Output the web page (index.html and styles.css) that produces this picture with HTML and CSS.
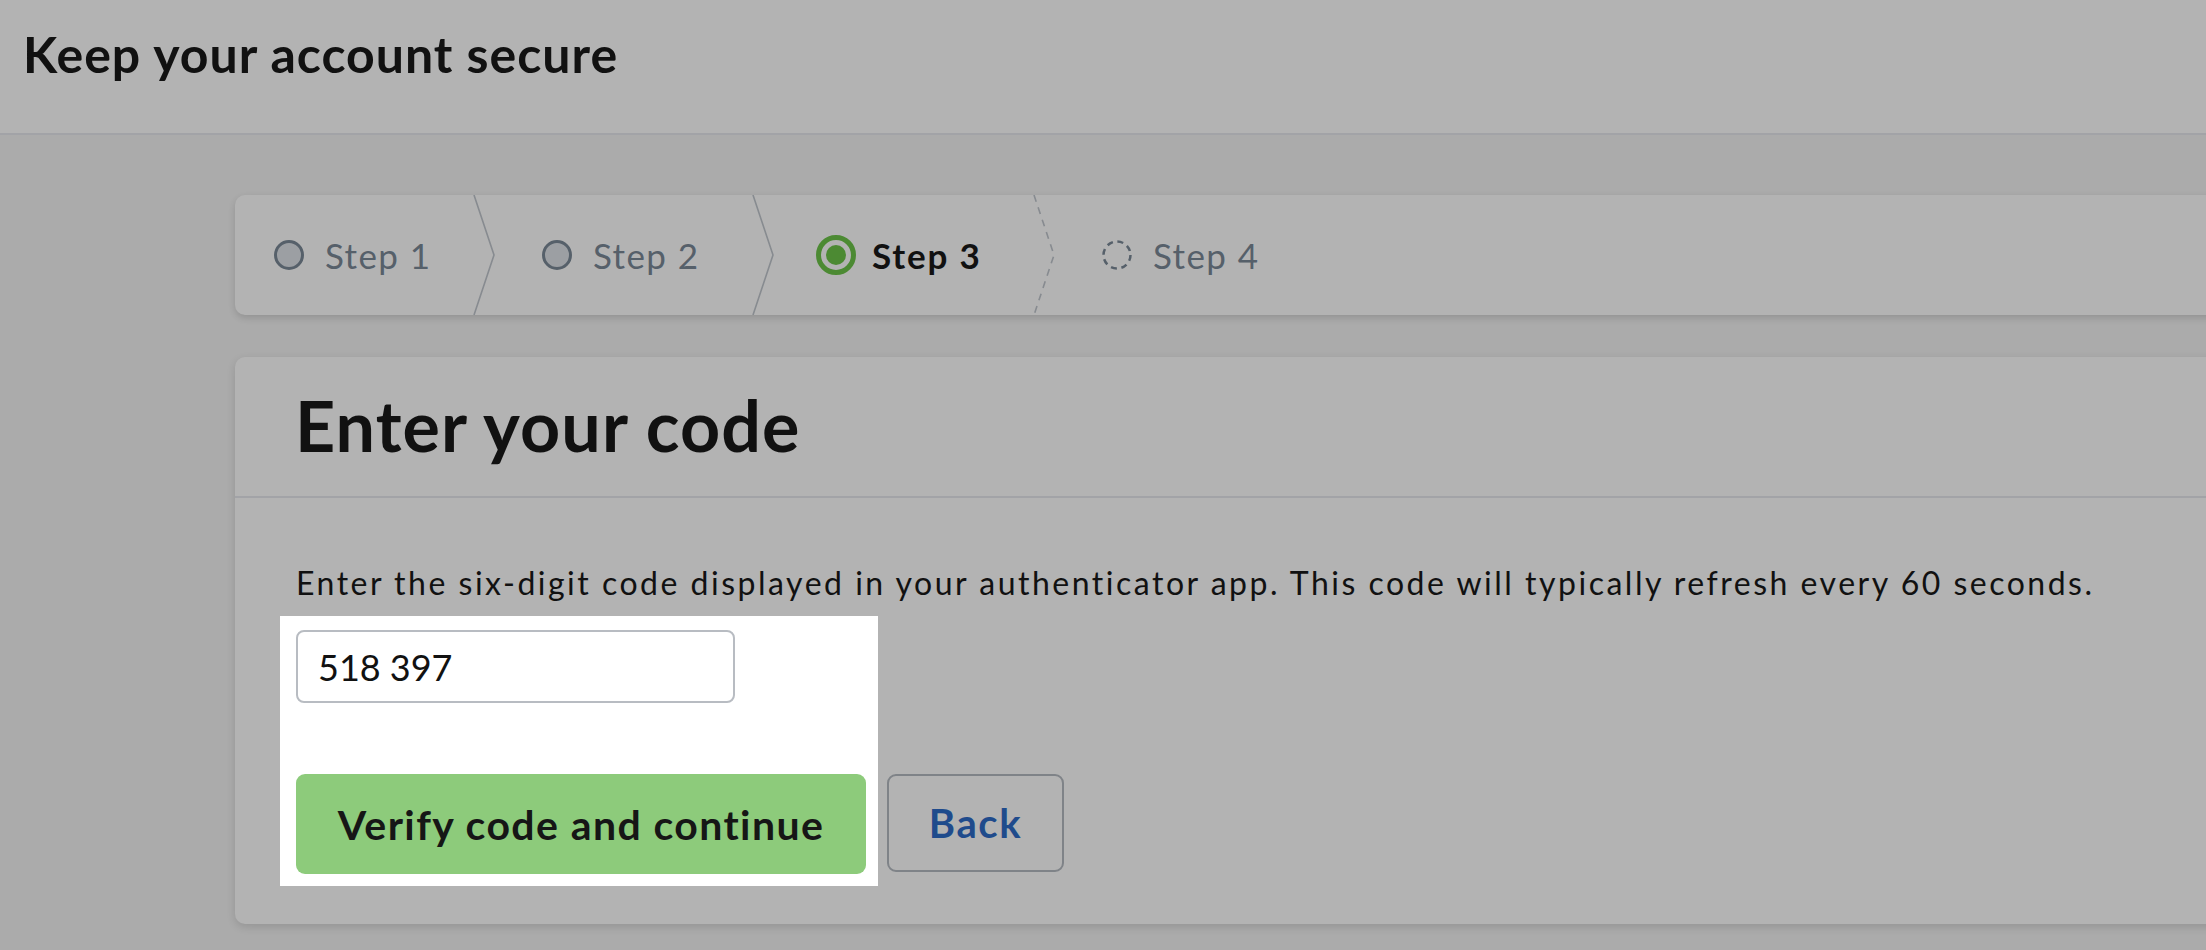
FILE: index.html
```html
<!DOCTYPE html>
<html lang="en">
<head>
<meta charset="utf-8">
<title>Keep your account secure</title>
<link rel="stylesheet" href="styles.css">
</head>
<body>
<header class="topbar">
  <h1 class="topbar-title">Keep your account secure</h1>
</header>
<main class="main">
  <nav class="stepbar">
    <div class="step step-1">
      <svg class="ind" width="30" height="30" viewBox="0 0 30 30"><circle cx="15" cy="15" r="13.5" fill="#9c9fa3" stroke="#56606a" stroke-width="3"/></svg>
      <span class="step-label">Step 1</span>
    </div>
    <svg class="chev" width="22" height="120" viewBox="0 0 22 120"><polyline points="1,0 21,60 1,120" fill="none" stroke="#878b90" stroke-width="1.6"/></svg>
    <div class="step step-2">
      <svg class="ind" width="30" height="30" viewBox="0 0 30 30"><circle cx="15" cy="15" r="13.5" fill="#9c9fa3" stroke="#56606a" stroke-width="3"/></svg>
      <span class="step-label">Step 2</span>
    </div>
    <svg class="chev" width="22" height="120" viewBox="0 0 22 120"><polyline points="1,0 21,60 1,120" fill="none" stroke="#878b90" stroke-width="1.6"/></svg>
    <div class="step step-3 is-current">
      <svg class="ind ind-lg" width="40" height="40" viewBox="0 0 40 40"><circle cx="20" cy="20" r="17.5" fill="none" stroke="#4c8a33" stroke-width="5"/><circle cx="20" cy="20" r="10" fill="#4c8a33"/></svg>
      <span class="step-label">Step 3</span>
    </div>
    <svg class="chev" width="22" height="120" viewBox="0 0 22 120"><polyline points="1,0 21,60 1,120" fill="none" stroke="#878b90" stroke-width="1.6" stroke-dasharray="7 6"/></svg>
    <div class="step step-4">
      <svg class="ind" width="30" height="30" viewBox="0 0 30 30"><circle cx="15" cy="15" r="13.5" fill="none" stroke="#56606a" stroke-width="2.5" stroke-dasharray="6 4.6"/></svg>
      <span class="step-label">Step 4</span>
    </div>
  </nav>

  <section class="card">
    <div class="card-head">
      <h2 class="card-title">Enter your code</h2>
    </div>
    <div class="card-body">
      <p class="hint">Enter the six-digit code displayed in your authenticator app. This code will typically refresh every 60 seconds.</p>
      <div class="actions">
        <div class="spot">
          <input class="code-input" type="text" value="518 397">
          <button class="btn-primary" type="button">Verify code and continue</button>
        </div>
        <button class="btn-back" type="button">Back</button>
      </div>
    </div>
  </section>
</main>
</body>
</html>
```

FILE: styles.css
```css
* { box-sizing: border-box; }

html, body {
  margin: 0;
  padding: 0;
}

body {
  background: #ababab;
  font-family: Lato, "Noto Sans", "Liberation Sans", sans-serif;
  color: #111111;
  overflow: hidden;
  height: 950px;
}

.topbar {
  height: 135px;
  background: #b3b3b3;
  border-bottom: 2px solid #a2a3a7;
  padding: 24px 0 0 23px;
}

.topbar-title {
  margin: 0;
  font-size: 50px;
  line-height: 60px;
  font-weight: 700;
  letter-spacing: 1px;
  color: #111111;
}

.main {
  padding: 60px 0 0 235px;
}

.stepbar {
  display: flex;
  align-items: center;
  height: 120px;
  margin-right: -60px;
  background: #b3b3b3;
  border-radius: 10px 0 0 10px;
  box-shadow: 0 3px 7px rgba(0, 0, 0, 0.14);
}

.step {
  display: flex;
  align-items: center;
  height: 120px;
  flex: none;
}

.step-1 { width: 238px; padding-left: 39px; }
.step-2 { width: 257px; padding-left: 47px; }
.step-3 { width: 259px; padding-left: 42px; }
.step-4 { width: 300px; padding-left: 47px; }

.ind { flex: none; display: block; margin-right: 21px; }
.ind-lg { margin-right: 16px; }

.chev { flex: none; display: block; }

.step-label {
  font-size: 35px;
  line-height: 40px;
  letter-spacing: 1.4px;
  color: #56606a;
  font-weight: 400;
}

.is-current .step-label {
  color: #111111;
  font-weight: 700;
  letter-spacing: 1.8px;
}

.card {
  margin-top: 42px;
  margin-right: -60px;
  background: #b3b3b3;
  border-radius: 10px 0 0 10px;
  box-shadow: 0 3px 8px rgba(0, 0, 0, 0.13);
}

.card-head {
  height: 141px;
  padding: 26px 0 0 60px;
  border-bottom: 2px solid #a2a3a7;
}

.card-title {
  margin: 0;
  font-size: 70px;
  line-height: 84px;
  font-weight: 700;
  letter-spacing: 1.1px;
  color: #111111;
}

.card-body {
  padding: 66px 0 38px 61px;
}

.hint {
  margin: 0 0 14px 0;
  font-size: 32px;
  line-height: 38px;
  letter-spacing: 2.5px;
  color: #111111;
}

.actions {
  display: flex;
  align-items: flex-end;
}

.spot {
  display: flex;
  flex-direction: column;
  align-items: flex-start;
  margin-left: -16px;
  padding: 14px 12px 12px 16px;
  background: #ffffff;
}

.code-input {
  width: 439px;
  height: 73px;
  padding: 0 20px;
  border: 2px solid #b8bcc2;
  border-radius: 8px;
  background: #ffffff;
  font-family: Lato, "Noto Sans", "Liberation Sans", sans-serif;
  font-size: 36px;
  color: #111111;
  outline: none;
}

.btn-primary {
  margin-top: 71px;
  width: 570px;
  height: 100px;
  border: 0;
  border-radius: 9px;
  background: #8dcb7b;
  font-family: Lato, "Noto Sans", "Liberation Sans", sans-serif;
  font-size: 41px;
  font-weight: 700;
  letter-spacing: 1.4px;
  color: #161616;
  cursor: pointer;
}

.btn-back {
  margin: 0 0 14px 9px;
  width: 177px;
  height: 98px;
  border: 2px solid #7f8388;
  border-radius: 9px;
  background: transparent;
  font-family: Lato, "Noto Sans", "Liberation Sans", sans-serif;
  font-size: 40px;
  font-weight: 700;
  letter-spacing: 1.6px;
  color: #1f4b8c;
  cursor: pointer;
}
```
